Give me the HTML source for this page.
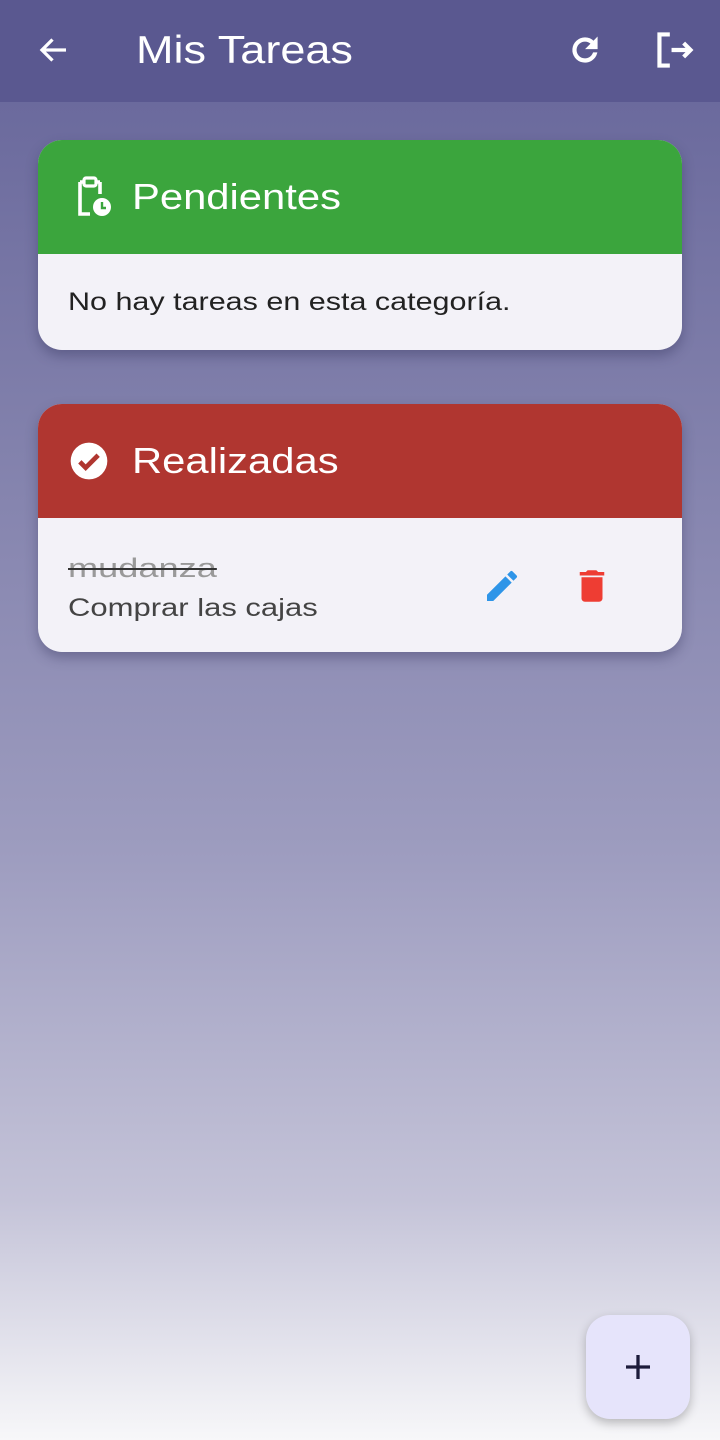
<!DOCTYPE html>
<html><head><meta charset="utf-8"><style>
*{margin:0;padding:0;box-sizing:border-box}
body{width:720px;height:1440px;position:relative;overflow:hidden;font-family:"Liberation Sans",sans-serif;
background:linear-gradient(#6b6a9d 102px,#7f7eaa 400px,#9d9cbf 850px,#c4c3d8 1200px,#f7f7f9 1440px)}
.bar{position:absolute;left:0;top:0;width:720px;height:102px;background:#5a5890}
.s{transform-origin:0 50%;white-space:nowrap}
.title{position:absolute;left:136px;top:29px;color:#fff;font-size:39px;transform:scaleX(1.155)}
.card{position:absolute;left:38px;width:644px;border-radius:24px;overflow:hidden;background:#f3f2f8;box-shadow:0 6px 12px rgba(40,40,80,.35)}
.hd{height:114px;position:relative;color:#fff;font-size:36px}
.hd span{position:absolute;left:94px;top:36px;transform:scaleX(1.16)}
.txt{position:absolute;color:#222;font-size:25px}
.fab{position:absolute;left:586px;top:1315px;width:104px;height:104px;border-radius:24px;background:#e6e4fb;box-shadow:0 4px 10px rgba(0,0,0,.25)}
</style></head><body>
<div class="bar"></div>
<svg style="position:absolute;left:36px;top:32px" width="36" height="36" viewBox="0 0 24 24"><path d="M20 12H5M11 5l-7 7 7 7" stroke="#fff" stroke-width="2.2" fill="none"/></svg>
<div class="title s">Mis Tareas</div>
<svg style="position:absolute;left:567px;top:32px" width="36" height="36" viewBox="0 0 24 24"><path d="M17.65 6.35A7.958 7.958 0 0 0 12 4a8 8 0 1 0 7.73 10h-2.08A6 6 0 1 1 12 6c1.66 0 3.14.69 4.22 1.78L13 11h7V4l-2.35 2.35z" fill="#fff" stroke="#fff" stroke-width=".8"/></svg>
<svg style="position:absolute;left:654px;top:31px" width="42" height="38" viewBox="0 0 24 22"><path d="M9 2H3v18h6M10 11h11M17 7l4 4-4 4" stroke="#fff" stroke-width="2.4" fill="none"/></svg>

<div class="card" style="top:140px;height:210px">
<div class="hd" style="background:#3ba53d">
<svg style="position:absolute;left:34px;top:36px" width="40" height="42" viewBox="0 0 20 21"><path d="M4 3h2M12 3h2M4 3v16h5M14 3v6" stroke="#fff" stroke-width="1.8" fill="none"/><rect x="6" y="1" width="6" height="4" rx="1" fill="none" stroke="#fff" stroke-width="1.6"/><circle cx="15" cy="15.5" r="4.5" fill="#fff"/><path d="M15 13v3h2" stroke="#3ba53d" stroke-width="1.2" fill="none"/></svg>
<span class="s">Pendientes</span></div>
<div class="txt s" style="left:30px;top:148px;transform:scaleX(1.22)">No hay tareas en esta categoría.</div>
</div>

<div class="card" style="top:404px;height:248px">
<div class="hd" style="background:#b03630">
<svg style="position:absolute;left:31px;top:37px" width="40" height="40" viewBox="0 0 24 24"><circle cx="12" cy="12" r="11" fill="#fff"/><path d="M6.5 12.5l3.5 3.5 7.5-7.5" stroke="#b03630" stroke-width="2.8" fill="none"/></svg>
<span class="s">Realizadas</span></div>
<div class="txt s" style="left:30px;top:149px;color:#999;font-size:27px;transform:scaleX(1.34);text-decoration:line-through;text-decoration-color:#333">mudanza</div>
<div class="txt s" style="left:30px;top:190px;color:#444;transform:scaleX(1.24)">Comprar las cajas</div>
<svg style="position:absolute;left:444px;top:162px" width="40" height="40" viewBox="0 0 24 24"><path d="M3 17.25V21h3.75L17.81 9.94l-3.75-3.75L3 17.25zM20.71 7.04a1 1 0 0 0 0-1.41l-2.34-2.34a1 1 0 0 0-1.41 0l-1.83 1.83 3.75 3.75 1.83-1.83z" fill="#2e95e8"/></svg>
<svg style="position:absolute;left:533px;top:161px" width="42" height="42" viewBox="0 0 24 24"><path d="M6 19c0 1.1.9 2 2 2h8c1.1 0 2-.9 2-2V7H6v12zM19 4h-3.5l-1-1h-5l-1 1H5v2h14V4z" fill="#ee3d33"/></svg>
</div>

<div class="fab"><svg style="position:absolute;left:34px;top:34px" width="36" height="36" viewBox="0 0 24 24"><path d="M12 4v16M4 12h16" stroke="#1c1b3a" stroke-width="2.2"/></svg></div>
</body></html>
